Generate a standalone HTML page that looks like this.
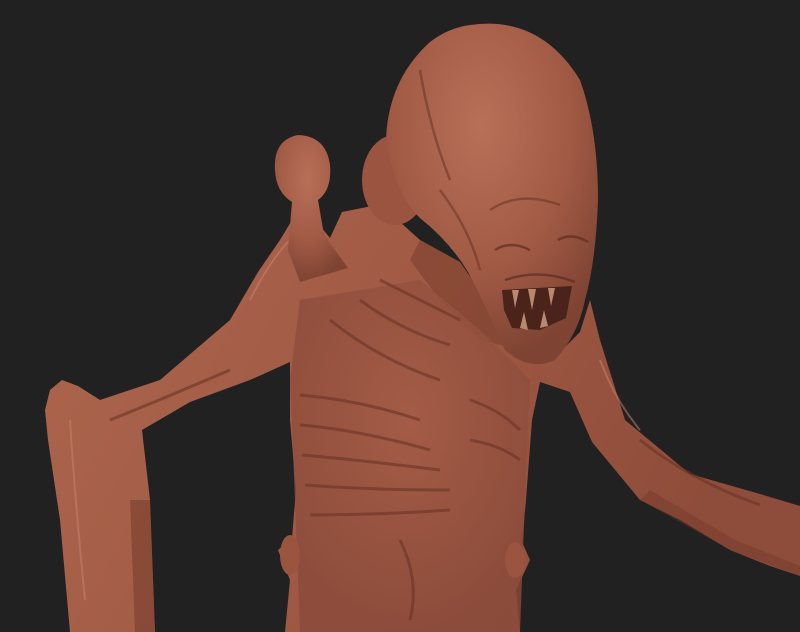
<!DOCTYPE html>
<html><head><meta charset="utf-8"><style>
html,body{margin:0;padding:0;background:#212121;}
svg{display:block}
</style></head><body>
<svg width="800" height="632" viewBox="0 0 800 632" xmlns="http://www.w3.org/2000/svg">
<defs>
<linearGradient id="g" x1="0" y1="0" x2="1" y2="0.3">
<stop offset="0" stop-color="#ad664e"/>
<stop offset="0.5" stop-color="#a15a44"/>
<stop offset="1" stop-color="#8e4c3a"/>
</linearGradient>
<radialGradient id="h" cx="0.45" cy="0.3" r="0.7">
<stop offset="0" stop-color="#b87059"/>
<stop offset="0.6" stop-color="#a15a44"/>
<stop offset="1" stop-color="#7e4333"/>
</radialGradient>
<radialGradient id="t" cx="0.5" cy="0.4" r="0.6">
<stop offset="0" stop-color="#a55d47"/>
<stop offset="1" stop-color="#8a4a3a"/>
</radialGradient>
</defs>
<rect width="800" height="632" fill="#212121"/>
<!-- body + arms -->
<path fill="url(#g)" d="M50,390 L62,380 L78,386 L100,400 L160,380 L230,320 L258,272 L280,240 L295,215 L312,216 L330,238 L342,212 L372,206 L400,222 L420,240 L460,262 L500,320 L560,352 L580,332 L590,300 L600,340 L625,420 L690,474 L760,494 L800,506 L800,576 L770,566 L730,550 L680,520 L640,500 L592,442 L570,392 L540,382 L532,420 L526,500 L522,542 L530,560 L516,590 L520,632 L285,632 L290,580 L278,550 L292,538 L296,490 L290,420 L290,362 L250,380 L190,402 L142,430 L150,500 L155,632 L70,632 L60,520 L48,440 L45,410 Z"/>
<!-- neck shadow -->
<path fill="#6e3729" opacity="0.45" d="M420,240 L460,262 L500,320 L520,350 L480,340 L440,300 L410,260 Z"/>
<!-- torso shading -->
<path fill="url(#t)" opacity="0.8" d="M300,300 L420,280 L480,330 L530,380 L525,500 L520,632 L300,632 L295,500 L290,380 Z"/>
<!-- ribs / wrinkles -->
<g stroke="#6a3427" stroke-width="3" fill="none" opacity="0.6">
<path d="M300,395 Q360,400 420,420"/><path d="M300,425 Q360,430 430,450"/><path d="M302,455 Q360,460 440,470"/><path d="M305,485 Q370,490 450,490"/><path d="M310,515 Q380,515 450,510"/>
<path d="M470,400 Q500,410 520,430"/><path d="M470,440 Q500,445 520,460"/><path d="M330,320 Q380,360 440,380"/>
<path d="M360,300 Q400,330 450,345"/><path d="M380,280 Q420,300 460,320"/><path d="M400,540 Q420,580 410,620"/>
<path d="M110,420 Q160,400 230,370"/><path d="M640,440 Q690,480 760,505"/>
</g>
<g stroke="#c9836b" stroke-width="2" fill="none" opacity="0.5">
<path d="M250,300 Q270,260 290,240"/><path d="M70,420 Q75,500 85,600"/><path d="M600,360 Q615,400 640,430"/>
</g>
<!-- shoulder spike -->
<path fill="url(#h)" d="M275,170 Q273,140 298,135 Q326,136 330,165 Q332,190 318,200 L324,235 L348,268 L300,282 L288,250 L292,202 Q276,192 275,170 Z"/>
<!-- back bulge -->
<ellipse cx="395" cy="180" rx="33" ry="45" fill="#9a543f"/>
<!-- head -->
<path fill="url(#h)" d="M470,25 Q540,15 580,80 Q598,130 598,200 Q596,260 585,300 Q578,335 555,360 Q530,372 505,350 Q488,310 468,272 Q450,242 420,218 Q395,195 386,140 Q388,80 430,42 Q448,28 470,25 Z"/>
<g fill="none" stroke="#6a3427" stroke-width="2.5" opacity="0.55">
<path d="M420,70 Q430,130 450,180"/><path d="M440,190 Q470,230 480,270"/><path d="M490,210 Q520,190 560,205"/>
</g>
<!-- face details -->
<g fill="none" stroke="#5e2e22" stroke-width="2.5" opacity="0.7">
<path d="M495,250 Q510,240 530,250"/><path d="M558,240 Q572,232 588,242"/>
<path d="M505,280 Q540,268 575,282"/>
</g>
<path d="M502,290 L572,286 L566,318 L540,330 L512,328 L504,310 Z" fill="#4a231b"/>
<g fill="#b8886f"><path d="M512,290 L515,308 L519,290Z"/><path d="M528,289 L532,310 L536,289Z"/><path d="M548,288 L551,306 L555,288Z"/><path d="M520,328 L524,312 L528,330Z"/><path d="M540,328 L544,310 L548,326Z"/></g>
<!-- bottom nubs -->
<ellipse cx="290" cy="555" rx="10" ry="20" fill="#9a543f"/>
<ellipse cx="515" cy="560" rx="10" ry="18" fill="#9a543f"/>
<!-- arm shadows -->
<path d="M150,500 L155,632 L135,632 L130,500 Z" fill="#6e3729" opacity="0.5"/>
<path d="M640,500 L730,550 L800,576 L800,566 L735,540 L650,490 Z" fill="#6e3729" opacity="0.4"/>
</svg>
</body></html>
